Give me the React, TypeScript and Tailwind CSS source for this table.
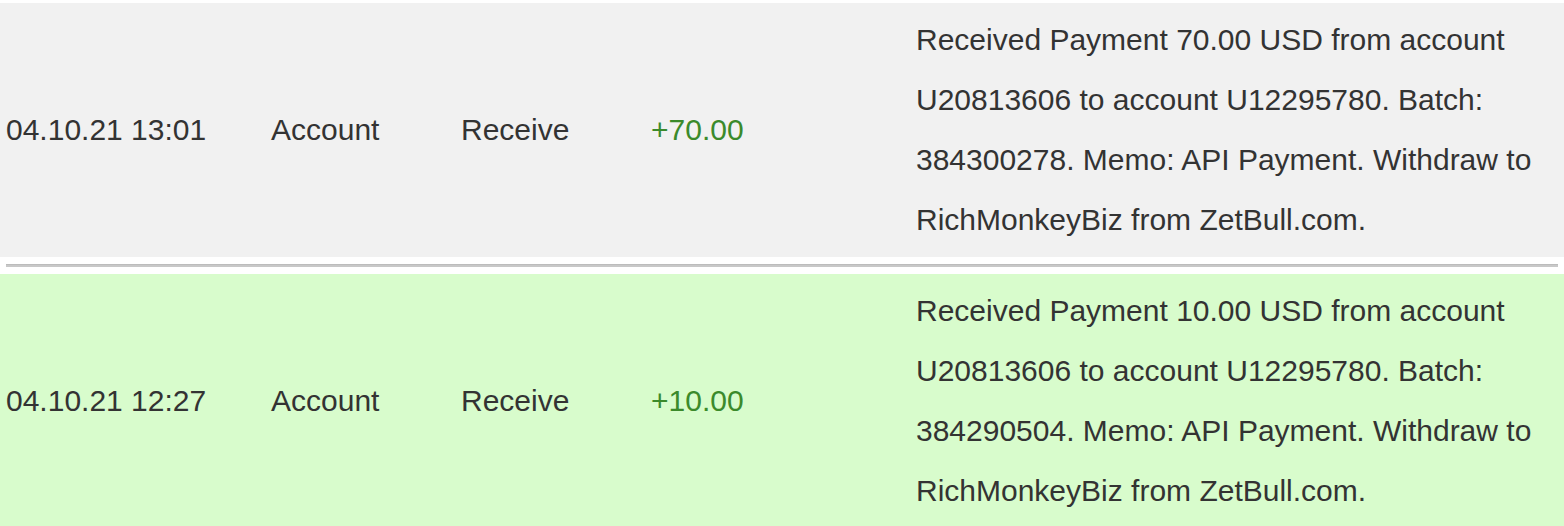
import React from "react";

type Row = { date: string; amount: string; desc: string; bg: string };

const rows: Row[] = [
  {
    date: "04.10.21 13:01",
    amount: "+70.00",
    desc: "Received Payment 70.00 USD from account U20813606 to account U12295780. Batch: 384300278. Memo: API Payment. Withdraw to RichMonkeyBiz from ZetBull.com.",
    bg: "bg-[#f1f1f1]",
  },
  {
    date: "04.10.21 12:27",
    amount: "+10.00",
    desc: "Received Payment 10.00 USD from account U20813606 to account U12295780. Batch: 384290504. Memo: API Payment. Withdraw to RichMonkeyBiz from ZetBull.com.",
    bg: "bg-[#d8fccc]",
  },
];

function TxRow({ r }: { r: Row }) {
  return (
    <div className={`flex items-center py-[7px] ${r.bg}`}>
      <div className="w-[271px] shrink-0 pl-[6px]">{r.date}</div>
      <div className="w-[190px] shrink-0">Account</div>
      <div className="w-[190px] shrink-0">Receive</div>
      <div className="w-[265px] shrink-0 text-[#3b8a2b]">{r.amount}</div>
      <div className="w-[640px] shrink-0">{r.desc}</div>
    </div>
  );
}

export default function App() {
  return (
    <div
      className="w-[1564px] h-[526px] overflow-hidden bg-white pt-[3px] text-[30px] leading-[60px] text-[#333333]"
      style={{ fontFamily: '"Liberation Sans", Arial, Helvetica, sans-serif' }}
    >
      <TxRow r={rows[0]} />
      <div className="py-[7px] px-[6px]">
        <div className="h-[3px] bg-[#c8c8c8] border-t border-[#bcbcbc]" />
      </div>
      <TxRow r={rows[1]} />
    </div>
  );
}
